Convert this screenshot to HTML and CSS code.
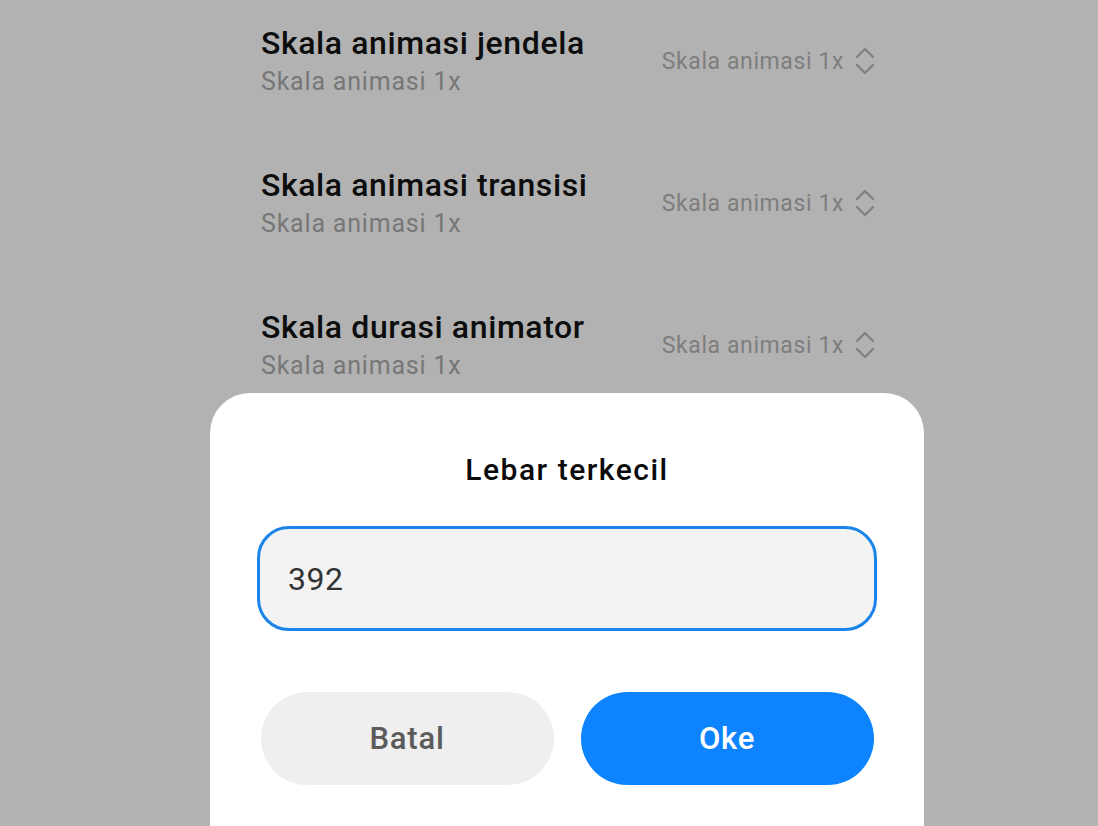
FILE: index.html
```html
<!DOCTYPE html>
<html lang="id">
<head>
<meta charset="utf-8">
<title>Lebar terkecil</title>
<link rel="stylesheet" href="styles.css">
</head>
<body>
<div class="list">
  <div class="row">
    <div class="texts">
      <div class="title">Skala animasi jendela</div>
      <div class="sub">Skala animasi 1x</div>
    </div>
    <div class="value">Skala animasi 1x
      <svg class="chev" width="20" height="30" viewBox="0 0 20 30"><path d="M2 11 L10 3 L18 11 M2 19 L10 27 L18 19" fill="none" stroke="#7f7f7f" stroke-width="2.2" stroke-linecap="round" stroke-linejoin="round"/></svg>
    </div>
  </div>
  <div class="row">
    <div class="texts">
      <div class="title">Skala animasi transisi</div>
      <div class="sub">Skala animasi 1x</div>
    </div>
    <div class="value">Skala animasi 1x
      <svg class="chev" width="20" height="30" viewBox="0 0 20 30"><path d="M2 11 L10 3 L18 11 M2 19 L10 27 L18 19" fill="none" stroke="#7f7f7f" stroke-width="2.2" stroke-linecap="round" stroke-linejoin="round"/></svg>
    </div>
  </div>
  <div class="row">
    <div class="texts">
      <div class="title">Skala durasi animator</div>
      <div class="sub">Skala animasi 1x</div>
    </div>
    <div class="value">Skala animasi 1x
      <svg class="chev" width="20" height="30" viewBox="0 0 20 30"><path d="M2 11 L10 3 L18 11 M2 19 L10 27 L18 19" fill="none" stroke="#7f7f7f" stroke-width="2.2" stroke-linecap="round" stroke-linejoin="round"/></svg>
    </div>
  </div>
</div>
<div class="dialog">
  <div class="dlg-title">Lebar terkecil</div>
  <div class="input">392</div>
  <div class="buttons">
    <div class="btn cancel">Batal</div>
    <div class="btn ok">Oke</div>
  </div>
</div>
</body>
</html>
```
FILE: styles.css
```css
html, body {
  margin: 0;
  padding: 0;
  height: 100%;
  overflow: hidden;
}
body {
  background: #b2b2b2;
  font-family: Roboto, "Noto Sans", sans-serif;
}
.list {
  display: flex;
  flex-direction: column;
  gap: 70px;
  padding: 25px 0 0 261px;
  width: 614px;
}
.row {
  display: flex;
  align-items: center;
  justify-content: space-between;
}
.title {
  font-size: 32px;
  font-weight: 500;
  line-height: 36px;
  letter-spacing: 0.6px;
  color: #0d0d0d;
}
.sub {
  margin-top: 6px;
  font-size: 25px;
  line-height: 30px;
  letter-spacing: 0.8px;
  color: #777777;
}
.value {
  display: flex;
  align-items: center;
  gap: 11px;
  font-size: 23px;
  letter-spacing: 0.6px;
  color: #7e7e7e;
}
.chev {
  display: block;
}
.dialog {
  margin: 12px 0 0 210px;
  width: 714px;
  height: 460px;
  background: #ffffff;
  border-radius: 40px 40px 0 0;
  display: flex;
  flex-direction: column;
  align-items: center;
  padding-top: 57px;
  box-sizing: border-box;
}
.dlg-title {
  font-size: 30px;
  font-weight: 500;
  line-height: 40px;
  letter-spacing: 1.5px;
  color: #0a0a0a;
}
.input {
  margin-top: 36px;
  width: 620px;
  height: 105px;
  flex-shrink: 0;
  box-sizing: border-box;
  border: 3px solid #1a84ea;
  border-radius: 32px;
  background: #f3f3f3;
  display: flex;
  align-items: center;
  padding-left: 28px;
  font-size: 32px;
  letter-spacing: 0.5px;
  color: #333333;
}
.buttons {
  margin-top: 61px;
  display: flex;
  gap: 27px;
}
.btn {
  width: 293px;
  height: 93px;
  border-radius: 47px;
  display: flex;
  align-items: center;
  justify-content: center;
  font-size: 31px;
  font-weight: 500;
  letter-spacing: 0.8px;
}
.cancel {
  background: #efefef;
  color: #5b5b5b;
}
.ok {
  background: #0d84fe;
  color: #ffffff;
}
```
